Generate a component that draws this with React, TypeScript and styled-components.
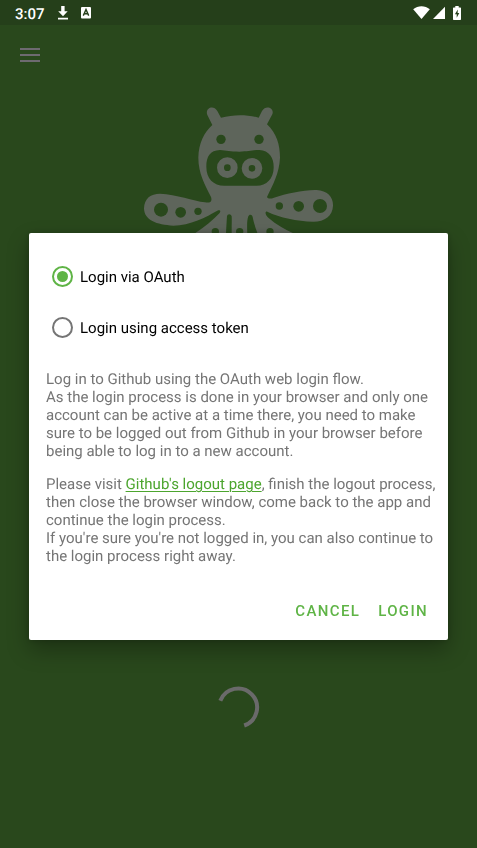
import React, { useState } from "react";
import styled, { createGlobalStyle } from "styled-components";

const GlobalStyle = createGlobalStyle`
  * { box-sizing: border-box; }
  body {
    margin: 0;
    background: #29481c;
    font-family: Roboto, "Noto Sans", sans-serif;
    text-rendering: geometricPrecision;
  }
`;

const Screen = styled.div`
  min-height: 100vh;
  display: flex;
  flex-direction: column;
  background: #29481c;
`;

const StatusBar = styled.header`
  height: 25px;
  padding: 0 16px 0 15px;
  display: flex;
  align-items: center;
  justify-content: space-between;
  background: #253f1a;
  color: #fff;
`;

const StatusGroup = styled.div<{ $gap: number }>`
  display: flex;
  align-items: center;
  gap: ${(p) => p.$gap}px;
`;

const BatterySlot = styled.span`
  display: flex;
  padding-left: 5px;
`;

const Clock = styled.time`
  font-size: 15px;
  font-weight: 500;
  line-height: 24px;
  padding-top: 2px;
`;

const Toolbar = styled.nav`
  height: 60px;
  padding: 0 16px;
  display: flex;
  align-items: center;
`;

const MenuButton = styled.button`
  border: 0;
  padding: 4px;
  background: none;
  display: flex;
`;

const Backdrop = styled.main`
  flex: 1;
  display: flex;
  flex-direction: column;
  align-items: center;
  justify-content: space-between;
  padding: 10px 0 119px;
`;

const Overlay = styled.div`
  position: fixed;
  inset: 25px 0 0;
  display: flex;
  align-items: center;
  justify-content: center;
  padding: 0 29px;
`;

const Dialog = styled.form`
  width: 100%;
  max-width: 560px;
  padding: 18px 8px 12px 17px;
  border-radius: 2px;
  background: #fff;
  box-shadow: 0 10px 22px rgba(0, 0, 0, 0.3), 0 0 6px rgba(0, 0, 0, 0.2);
`;

const Options = styled.div`
  display: flex;
  flex-direction: column;
  padding-left: 6px;
`;

const Option = styled.label`
  height: 51px;
  display: flex;
  align-items: center;
  gap: 7px;
  font-size: 15px;
  line-height: 18px;
  color: #000;
`;

const Radio = styled.input`
  appearance: none;
  width: 21px;
  height: 21px;
  margin: 0;
  border: 2px solid #757575;
  border-radius: 50%;
  display: grid;
  place-items: center;

  &:checked {
    border-color: #5fb446;
  }
  &:checked::before {
    content: "";
    width: 11px;
    height: 11px;
    border-radius: 50%;
    background: #5fb446;
  }
`;

const Message = styled.div`
  display: flex;
  flex-direction: column;
  gap: 15px;
  padding-top: 17px;
  font-size: 15px;
  line-height: 18px;
  color: #757575;
`;

const Paragraph = styled.p`
  margin: 0;
`;

const Link = styled.a`
  color: #4ca52e;
  text-decoration: underline;
  text-decoration-thickness: 1px;
  text-underline-offset: 2px;
`;

const Actions = styled.div`
  display: flex;
  justify-content: flex-end;
  gap: 2px;
  padding: 29px 4px 0 0;
`;

const Action = styled.button`
  height: 34px;
  border: 0;
  padding: 0 8px;
  background: none;
  font-family: inherit;
  font-size: 15px;
  font-weight: 500;
  letter-spacing: 0.09em;
  color: #5fb446;
`;

const DownloadIcon = () => (
  <svg width="12" height="16" viewBox="0 0 12 16" fill="#fff" aria-hidden="true">
    <path d="M4.2 1h3.4v5.2h3.1L6 11.2 1.2 6.2h3zM1 12.8h10v1.6H1z" />
  </svg>
);

const LetterIcon = () => (
  <svg width="10" height="12" viewBox="0 0 10 12" aria-hidden="true">
    <rect width="10" height="11.5" rx="1" fill="#fff" />
    <path d="M2.3 8.6 5 2.4l2.7 6.2M3.3 6.8h3.4" fill="none" stroke="#253f1a" strokeWidth="1.4" />
  </svg>
);

const WifiIcon = () => (
  <svg width="17" height="13" viewBox="0 0 17 13" fill="#fff" aria-hidden="true">
    <path d="M8.5 13 .2 3.2C5-.7 12-.7 16.8 3.2z" />
  </svg>
);

const SignalIcon = () => (
  <svg width="12" height="13" viewBox="0 0 12 13" fill="#fff" aria-hidden="true">
    <path d="M12 .8V13H0z" />
  </svg>
);

const BatteryIcon = () => (
  <svg width="8" height="14" viewBox="0 0 8 14" aria-hidden="true">
    <path d="M2.3 0h3.4v1.4H7.3q.7 0 .7.7v11.2q0 .7-.7.7H.7q-.7 0-.7-.7V2.1q0-.7.7-.7h1.6z" fill="#fff" />
    <path d="M4.8 3.6 1.9 8.3h1.8v3.5l2.6-4.7H4.6z" fill="#253f1a" />
  </svg>
);

const MenuIcon = () => (
  <svg width="20" height="16" viewBox="0 0 20 16" fill="#6d6a70" aria-hidden="true">
    <path d="M0 1h20v2H0zM0 7h20v2H0zM0 13h20v2H0z" />
  </svg>
);

const Mascot = () => (
  <svg width="219" height="180" viewBox="-3 0 657 540" role="img" aria-label="Octopus mascot">
    <path
      fill="#5e655b"
      d="M247 90 232 60C224 40 250 28 262 48L273 68C310 58 350 58 386 68L396 48C408 28 434 40 427 58L411 88C440 115 450 150 450 188C448 235 428 270 411 306C414 312 422 312 432 308C470 296 520 284 560 285C592 287 610 306 609 332C608 362 585 380 550 380C500 378 450 368 412 350C404 348 405 360 415 368C440 390 465 402 490 415C530 432 540 480 500 500L160 500C120 470 160 435 195 415C225 395 250 374 269 354C274 346 268 344 262 347C230 365 180 392 130 392C80 390 42 375 42 340C43 310 62 296 90 296C140 298 190 318 225 322C238 324 248 322 243 306C225 270 205 235 205 188C206 145 222 112 247 90Z"
    />
    <g fill="#29481c">
      <path d="M229 215C229 185 240 166 270 165C290 166 300 170 328 170C356 170 366 165 388 165C418 166 431 190 431 215C432 250 410 272 380 272H283C250 272 229 250 229 215Z" />
      <path d="M287 440C289 395 290 380 291 364C292 356 303 356 305 364C306 380 304 398 306 440Z" />
      <path d="M353 440C351 395 350 378 355 364C358 357 366 358 368 366C371 382 376 398 392 440Z" />
      <circle cx="273" cy="133" r="14" />
      <circle cx="387" cy="133" r="14" />
      <circle cx="93" cy="344" r="21" />
      <circle cx="152" cy="352" r="16" />
      <circle cx="204" cy="349" r="11" />
      <circle cx="448" cy="333" r="11" />
      <circle cx="506" cy="334" r="16" />
      <circle cx="570" cy="333" r="21" />
      <circle cx="256" cy="410" r="11" />
      <circle cx="329" cy="410" r="11" />
      <circle cx="420" cy="410" r="11" />
    </g>
    <g fill="none" stroke="#5e655b" strokeWidth="21">
      <circle cx="292" cy="218" r="20.5" />
      <circle cx="366" cy="220" r="20.5" />
    </g>
  </svg>
);

const Spinner = () => (
  <svg width="44" height="44" viewBox="0 0 44 44" role="img" aria-label="Loading">
    <path d="M3.3 15.8A19 19 0 1 1 27.2 40.5" fill="none" stroke="#6a6a6a" strokeWidth="4" />
  </svg>
);

export default function App() {
  const [method, setMethod] = useState("oauth");

  return (
    <Screen>
      <GlobalStyle />
      <StatusBar>
        <StatusGroup $gap={12}>
          <Clock>3:07</Clock>
          <DownloadIcon />
          <LetterIcon />
        </StatusGroup>
        <StatusGroup $gap={3}>
          <WifiIcon />
          <SignalIcon />
          <BatterySlot>
            <BatteryIcon />
          </BatterySlot>
        </StatusGroup>
      </StatusBar>
      <Toolbar>
        <MenuButton type="button" aria-label="Open menu">
          <MenuIcon />
        </MenuButton>
      </Toolbar>
      <Backdrop>
        <Mascot />
        <Spinner />
      </Backdrop>
      <Overlay>
        <Dialog role="dialog" aria-label="Login" onSubmit={(e) => e.preventDefault()}>
          <Options>
            <Option>
              <Radio type="radio" name="method" checked={method === "oauth"} onChange={() => setMethod("oauth")} />
              Login via OAuth
            </Option>
            <Option>
              <Radio type="radio" name="method" checked={method === "token"} onChange={() => setMethod("token")} />
              Login using access token
            </Option>
          </Options>
          <Message>
            <Paragraph>
              Log in to Github using the OAuth web login flow.
              <br />
              As the login process is done in your browser and only one account can be active at a time there, you need
              to make sure to be logged out from Github in your browser before being able to log in to a new account.
            </Paragraph>
            <Paragraph>
              Please visit <Link href="#logout">Github's logout page</Link>, finish the logout process, then close the
              browser window, come back to the app and continue the login process.
              <br />
              If you're sure you're not logged in, you can also continue to the login process right away.
            </Paragraph>
          </Message>
          <Actions>
            <Action type="button">CANCEL</Action>
            <Action type="submit">LOGIN</Action>
          </Actions>
        </Dialog>
      </Overlay>
    </Screen>
  );
}
